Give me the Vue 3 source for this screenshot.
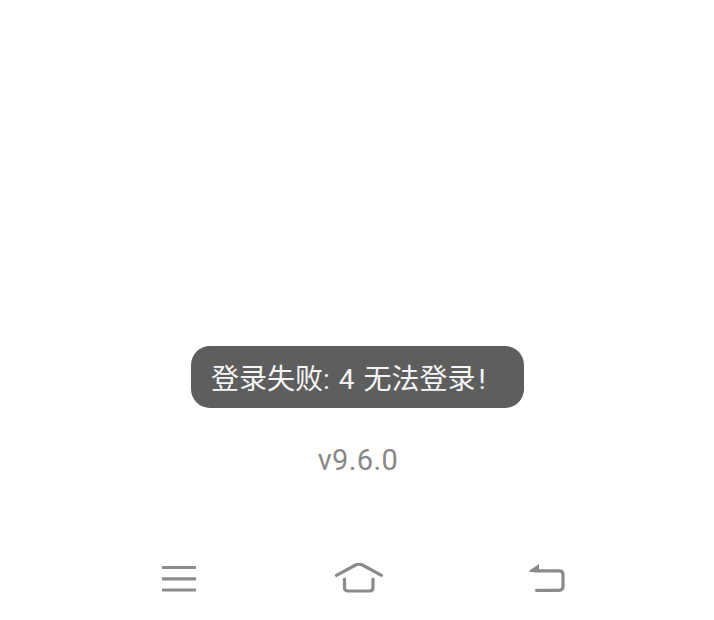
<script setup>
const message = '登录失败: 4 无法登录'
const version = 'v9.6.0'
</script>

<template>
  <div class="screen">
    <main class="content">
      <p class="version">{{ version }}</p>
    </main>
    <div class="toast">{{ message }}<span class="bang">!</span></div>
    <nav class="nav">
      <svg class="icon menu" viewBox="0 0 34 26" aria-label="菜单">
        <path d="M1 1.5H33M1 12.8H33M1 24H33" />
      </svg>
      <svg class="icon home" viewBox="0 0 48 30" aria-label="主页">
        <path d="M1.5 12.3 L21 1.8 Q24 0.4 27 1.8 L46.5 12.3" />
        <path d="M9.5 16V24.5Q9.5 28 13 28H34.5Q38 28 38 24.5V16" />
      </svg>
      <svg class="icon back" viewBox="0 0 36 28" aria-label="返回">
        <path class="head" d="M0.5 6.5 L10 0 V8 H0.5Z" />
        <path d="M5 6.8H30Q34 6.8 34 10.5V22.5Q34 26.3 30 26.3H7.5" />
      </svg>
    </nav>
  </div>
</template>

<style scoped>
.screen {
  position: relative;
  width: 714px;
  height: 620px;
  display: flex;
  flex-direction: column;
  background: #ffffff;
  font-family: "Roboto", "Noto Sans CJK SC", sans-serif;
  overflow: hidden;
}

.content {
  flex: 1;
  display: flex;
  flex-direction: column;
  align-items: center;
  padding-top: 441px;
  padding-left: 2px;
}

.version {
  margin: 0;
  font-size: 29px;
  line-height: 38px;
  color: #888888;
  letter-spacing: 0.4px;
}

.toast {
  position: absolute;
  left: 191px;
  top: 346px;
  width: 333px;
  height: 62px;
  box-sizing: border-box;
  padding: 5px 0 0 20px;
  border-radius: 19px;
  background: #5e5e5e;
  color: #f6f6f6;
  font-size: 28px;
  line-height: 57px;
  word-spacing: 2px;
  white-space: nowrap;
}

.bang {
  margin-left: 3px;
}

.nav {
  display: flex;
  align-items: flex-start;
  height: 60px;
  flex: none;
  padding-left: 162px;
}

.icon {
  display: block;
  fill: none;
  stroke: #8b8b8b;
  stroke-width: 3.2;
  stroke-linecap: round;
}

.menu {
  width: 34px;
  height: 26px;
  margin-top: 6px;
}

.home {
  width: 48px;
  height: 30px;
  margin-top: 3px;
  margin-left: 139px;
}

.back {
  width: 36px;
  height: 28px;
  margin-top: 4px;
  margin-left: 146px;
}

.head {
  fill: #8b8b8b;
  stroke: none;
}
</style>
